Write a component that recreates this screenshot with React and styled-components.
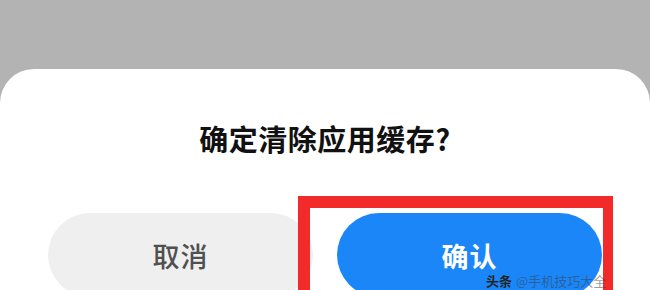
import React from 'react';
import styled, { createGlobalStyle } from 'styled-components';

const GlobalStyle = createGlobalStyle`
  html, body {
    margin: 0;
    padding: 0;
    background: #b3b3b3;
  }
  body {
    font-family: "Noto Sans CJK SC", "Noto Sans", sans-serif;
  }
`;

const Screen = styled.div`
  width: 650px;
  height: 290px;
  overflow: hidden;
  background: #b3b3b3;
  display: flex;
  flex-direction: column;
`;

const Backdrop = styled.div`
  height: 69px;
  flex: none;
`;

const Sheet = styled.div`
  flex: 1;
  background: #ffffff;
  border-radius: 34px 34px 0 0;
  padding-top: 53px;
  position: relative;
`;

const Title = styled.h2`
  margin: 0;
  text-align: center;
  font-size: 29px;
  line-height: 32px;
  font-weight: 700;
  color: #111111;
  letter-spacing: 0.5px;
`;

const Actions = styled.div`
  display: grid;
  grid-template-columns: 1fr 1fr;
  gap: 24px;
  padding: 0 48px;
  margin-top: 59px;
`;

const Slot = styled.div`
  position: relative;
`;

const Button = styled.button`
  width: 100%;
  height: 84px;
  border: none;
  border-radius: 42px;
  font-family: inherit;
  font-size: 27px;
  font-weight: ${(p) => (p.$primary ? 700 : 500)};
  letter-spacing: 1px;
  padding: 23px 0 0;
  background: ${(p) => (p.$primary ? '#1a86f8' : '#efefef')};
  color: ${(p) => (p.$primary ? '#ffffff' : '#505050')};
  display: flex;
  align-items: flex-start;
  justify-content: center;
`;

// red annotation frame drawn over the confirm button
const Highlight = styled.div`
  position: absolute;
  left: -39px;
  top: -17px;
  right: -11px;
  height: 140px;
  border: 12px solid #f22a2a;
  border-right-width: 10px;
  pointer-events: none;
`;

const Watermark = styled.div`
  position: absolute;
  left: 486px;
  top: 204px;
  font-size: 13px;
  line-height: 15px;
  color: rgba(60, 60, 60, 0.5);
  white-space: nowrap;

  b {
    color: #222;
    font-weight: 700;
    margin-right: 4px;
  }
`;

export default function App() {
  return (
    <Screen>
      <GlobalStyle />
      <Backdrop />
      <Sheet>
        <Title>确定清除应用缓存?</Title>
        <Actions>
          <Slot>
            <Button>取消</Button>
          </Slot>
          <Slot>
            <Button $primary>确认</Button>
            <Highlight />
          </Slot>
        </Actions>
        <Watermark>
          <b>头条</b>@手机技巧大全
        </Watermark>
      </Sheet>
    </Screen>
  );
}
